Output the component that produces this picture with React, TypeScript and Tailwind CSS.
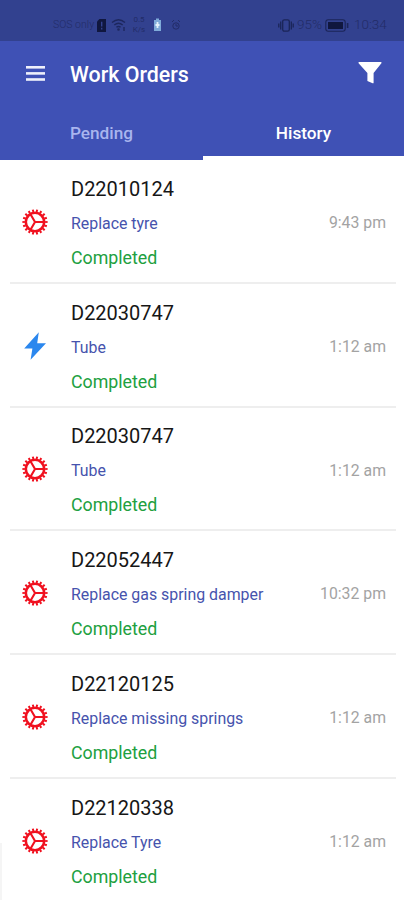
type Order = {
  code: string;
  title: string;
  time: string;
  kind: "gear" | "bolt";
};

const orders: Order[] = [
  { code: "D22010124", title: "Replace tyre", time: "9:43 pm", kind: "gear" },
  { code: "D22030747", title: "Tube", time: "1:12 am", kind: "bolt" },
  { code: "D22030747", title: "Tube", time: "1:12 am", kind: "gear" },
  { code: "D22052447", title: "Replace gas spring damper", time: "10:32 pm", kind: "gear" },
  { code: "D22120125", title: "Replace missing springs", time: "1:12 am", kind: "gear" },
  { code: "D22120338", title: "Replace Tyre", time: "1:12 am", kind: "gear" },
];

const GearIcon = () => (
  <svg width="26" height="26" viewBox="-13 -13 26 26" fill="none" stroke="#f0111f">
    <circle r="9.2" strokeWidth="2.6" />
    {/* 18 teeth around the rim */}
    <circle r="11.3" strokeWidth="2.6" pathLength="36" strokeDasharray="1 1" strokeDashoffset="0.5" />
    <path d="M0 0H9.5M0 0L-4.8 -8.2M0 0L-4.8 8.2" strokeWidth="2.1" />
  </svg>
);

const BoltIcon = () => (
  <svg width="26" height="30" viewBox="0 0 26 30" fill="#2b87ee">
    <path d="M16.8 1.2L2.2 17.4H10.4L8.6 28.8L24 12.2H15.2Z" />
  </svg>
);

const StatusBar = () => (
  <div className="flex h-[41px] items-center bg-[#32418f] pt-[9px] pr-[17px] pl-[53px] text-[#222c68]">
    <span className="w-[41px] text-[10.5px] leading-none font-light whitespace-nowrap">SOS only</span>
    <svg className="ml-[3px]" width="9" height="13" viewBox="0 0 9 13">
      <path d="M2.5 0H9V13H0V2.5Z" fill="#10173f" />
      <path d="M4.7 2.7V7.5M4.7 8.8V10.4" stroke="#32418f" strokeWidth="1.4" />
    </svg>
    <svg className="ml-[5px]" width="16" height="14" viewBox="0 0 16 14" fill="none" stroke="#1d275e" strokeWidth="1.4">
      <path d="M1 4.5Q7.5 -1 14 4.5M3.3 7Q7.5 3.4 11.7 7M5.4 9.3Q7.5 7.6 9.6 9.3" />
      <circle cx="7.5" cy="11.5" r="0.6" />
      <path d="M13 9V13" />
    </svg>
    <div className="ml-[5px] w-[14px] text-center text-[8px] leading-[10px]">
      <div>0.5</div>
      <div>K/s</div>
    </div>
    <svg className="ml-[7px]" width="9" height="14" viewBox="0 0 9 14">
      <path d="M3 0.5H6V2H8V13H1V2H3Z" fill="#7fabd9" />
      <path d="M4.5 4V10M2.5 7H6.5" stroke="#e3f2fb" strokeWidth="1.8" />
    </svg>
    <svg className="ml-[9px]" width="11" height="12" viewBox="0 0 11 12" fill="none" stroke="currentColor">
      <circle cx="5" cy="7" r="3.2" />
      <path d="M5 5V7H7M1 3L3 1M7 1L9 3" />
    </svg>
    <svg className="ml-auto" width="16" height="13" viewBox="0 0 16 13" fill="none" stroke="#1b2558" strokeWidth="1.3">
      <rect x="4.7" y="0.8" width="6.6" height="11.4" rx="1.6" />
      <path d="M2.7 2.5V10.5M0.8 4.5V8.5M13.3 2.5V10.5M15.2 4.5V8.5" />
    </svg>
    <span className="ml-[3px] w-[25px] text-[13.5px] leading-none font-light whitespace-nowrap">95%</span>
    <svg className="ml-[3px]" width="24" height="13" viewBox="0 0 24 13" fill="none" stroke="#1b2558" strokeWidth="1.1">
      <rect x="0.8" y="0.8" width="19.4" height="11.4" rx="2.4" />
      <rect x="3" y="3" width="15" height="7" fill="#10173f" stroke="none" />
      <path d="M22.6 4V9" strokeWidth="1.6" />
    </svg>
    <span className="ml-[5px] w-[33px] text-[13.5px] leading-none font-light whitespace-nowrap">10:34</span>
  </div>
);

const Header = () => (
  <header className="bg-[#3f51b5] text-white">
    <StatusBar />
    <div className="flex h-[65px] items-center pr-[21px] pl-[26px]">
      <svg width="19" height="15" viewBox="0 0 19 15" fill="#eef0fb">
        <rect width="19" height="2.6" />
        <rect y="6.1" width="19" height="2.6" />
        <rect y="12.2" width="19" height="2.6" />
      </svg>
      <h1 className="mt-[2px] ml-[25px] text-[21.4px] leading-[26px] font-medium">Work Orders</h1>
      <svg className="mb-[3px] ml-auto" width="26" height="23" viewBox="0 0 26 23" fill="#fff">
        <path d="M2.2 1H23.8Q25 1 24.4 2.2L16.6 12V21.8Q16.6 22.6 15.6 22.2L10.4 20V12L1.6 2.2Q1 1 2.2 1Z" />
      </svg>
    </div>
    <nav className="grid h-[54px] grid-cols-[203px_201px] text-center text-[17.2px] font-medium">
      <div className="leading-[55px] text-[#a9b5ee]">Pending</div>
      <div className="flex flex-col border-b-[5px] border-white pt-[3px] leading-[49px]">
        <span className="h-[46px]">History</span>
      </div>
    </nav>
  </header>
);

const OrderRow = ({ order }: { order: Order }) => (
  <li className="mr-[8px] ml-[10px] flex h-[123.8px] items-center border-b-2 border-[#eeeeee] last:border-transparent">
    <div className="flex w-[50px] justify-center pt-[2px]">
      {order.kind === "gear" ? <GearIcon /> : <BoltIcon />}
    </div>
    <div className="ml-[11px] flex-1 pt-[3px] whitespace-nowrap">
      <div className="text-[20px] leading-[34px] text-[#161616]">{order.code}</div>
      <div className="text-[15.9px] leading-[36px] text-[#4653ad]">{order.title}</div>
      <div className="text-[17.8px] leading-[31px] text-[#21a040]">Completed</div>
    </div>
    <div className="mr-[10px] pt-[4px] text-[15.8px] text-[#a3a3a3]">{order.time}</div>
  </li>
);

const App = () => {
  return (
    <div className="relative h-[900px] overflow-hidden bg-white font-['Roboto',sans-serif]">
      <Header />
      <ul>
        {orders.map((order, i) => (
          <OrderRow key={i} order={order} />
        ))}
      </ul>
      {/* edge handle */}
      <div className="absolute bottom-0 left-0 h-[57px] w-[2px] bg-[#f5f5f5]" />
    </div>
  );
};

export default App;
